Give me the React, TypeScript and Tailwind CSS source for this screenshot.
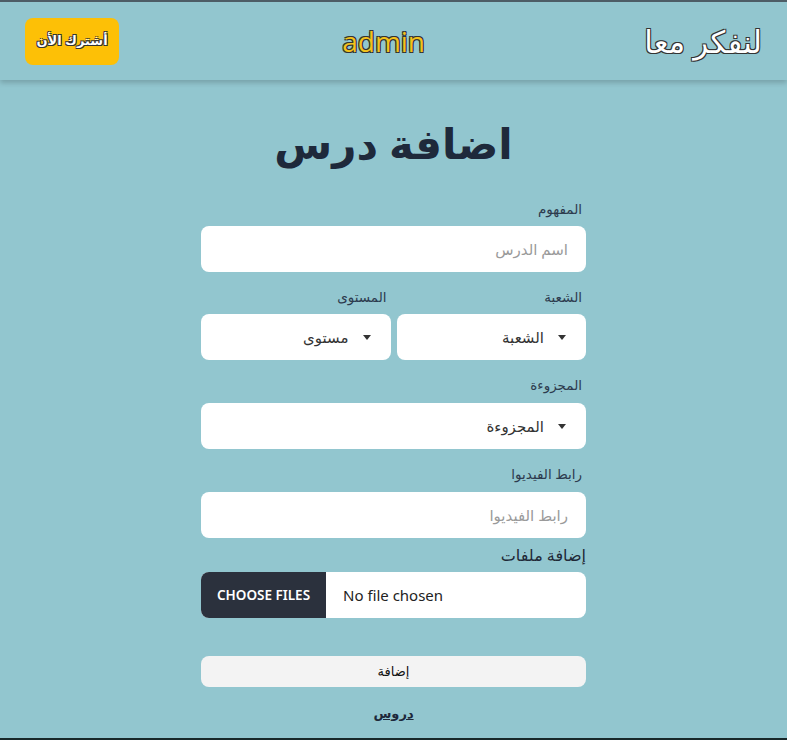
import React from "react";

const outline = "[text-shadow:_-1px_-1px_0_#333,_1px_-1px_0_#333,_-1px_1px_0_#333,_1px_1px_0_#333]";

function Caret() {
  return (
    <svg width="8" height="5" viewBox="0 0 8 5" className="shrink-0">
      <path d="M0 0 L8 0 L4 5 Z" fill="#333" />
    </svg>
  );
}

function Select({ text }: { text: string }) {
  return (
    <div className="flex h-[46px] items-center gap-[14px] rounded-lg bg-white pr-[20px] text-[15px] text-[#333]">
      <Caret />
      <span>{text}</span>
    </div>
  );
}

const labelCls = "block h-[20px] pr-[4px] text-[13.5px] leading-[20px] text-[#2d3b4e]";

export default function App() {
  return (
    <div
      dir="rtl"
      className="flex h-[740px] flex-col overflow-hidden border-t-2 border-b-2 border-t-[#4d5d66] border-b-[#18282a] bg-[#92c6cf]"
      style={{ fontFamily: '"Noto Sans", "DejaVu Sans", sans-serif' }}
    >
      <header className="flex h-[78px] shrink-0 items-center justify-between bg-[#92c6cf] px-[25px] shadow-[0_3px_5px_rgba(0,0,0,0.18)]">
        <div className={`text-[31px] text-white ${outline}`}>لنفكر معا</div>
        <div className={`ml-[4px] text-[28px] text-[#f3c21b] ${outline}`} style={{ fontFamily: '"Open Sans", sans-serif' }}>admin</div>
        <button className={`flex h-[47px] w-[94px] items-center justify-center rounded-lg bg-[#fdc006] text-[13px] font-bold text-white ${outline}`}>
          أشترك الأن
        </button>
      </header>

      <main className="mx-auto flex w-[385px] flex-col">
        <h1 className="mt-[31px] h-[64px] text-center text-[42px] font-bold leading-[64px] text-[#1e293b]">اضافة درس</h1>

        <label className={`mt-[24px] ${labelCls}`}>المفهوم</label>
        <div className="mt-[7px] flex h-[46px] items-center rounded-lg bg-white pr-[18px] text-[15px] text-[#9a9a9a]">اسم الدرس</div>

        <div className="mt-[15px] grid grid-cols-2 gap-[6px]">
          <div className="flex flex-col">
            <label className={labelCls}>الشعبة</label>
            <div className="mt-[7px]"><Select text="الشعبة" /></div>
          </div>
          <div className="flex flex-col">
            <label className={labelCls}>المستوى</label>
            <div className="mt-[7px]"><Select text="مستوى" /></div>
          </div>
        </div>

        <label className={`mt-[15px] ${labelCls}`}>المجزوءة</label>
        <div className="mt-[8px]"><Select text="المجزوءة" /></div>

        <label className={`mt-[15px] ${labelCls}`}>رابط الفيديوا</label>
        <div className="mt-[8px] flex h-[46px] items-center rounded-lg bg-white pr-[18px] text-[15px] text-[#9a9a9a]">رابط الفيديوا</div>

        <label className="mt-[7px] block h-[20px] text-[16px] leading-[20px] text-[#1f2937]">إضافة ملفات</label>
        <div dir="ltr" className="mt-[7px] flex h-[46px] items-center overflow-hidden rounded-lg bg-white">
          <div className="flex h-full w-[125px] items-center justify-center bg-[#2b313d] text-[13.5px] font-semibold text-white">CHOOSE FILES</div>
          <div className="pl-[17px] text-[15px] text-[#222]">No file chosen</div>
        </div>

        <button className="mt-[38px] h-[31px] rounded-lg bg-[#f3f3f3] text-[13px] text-[#111]">إضافة</button>

        <a className="mt-[16px] block h-[20px] text-center text-[13px] font-bold leading-[20px] text-[#1e293b] underline">دروس</a>
      </main>
    </div>
  );
}
